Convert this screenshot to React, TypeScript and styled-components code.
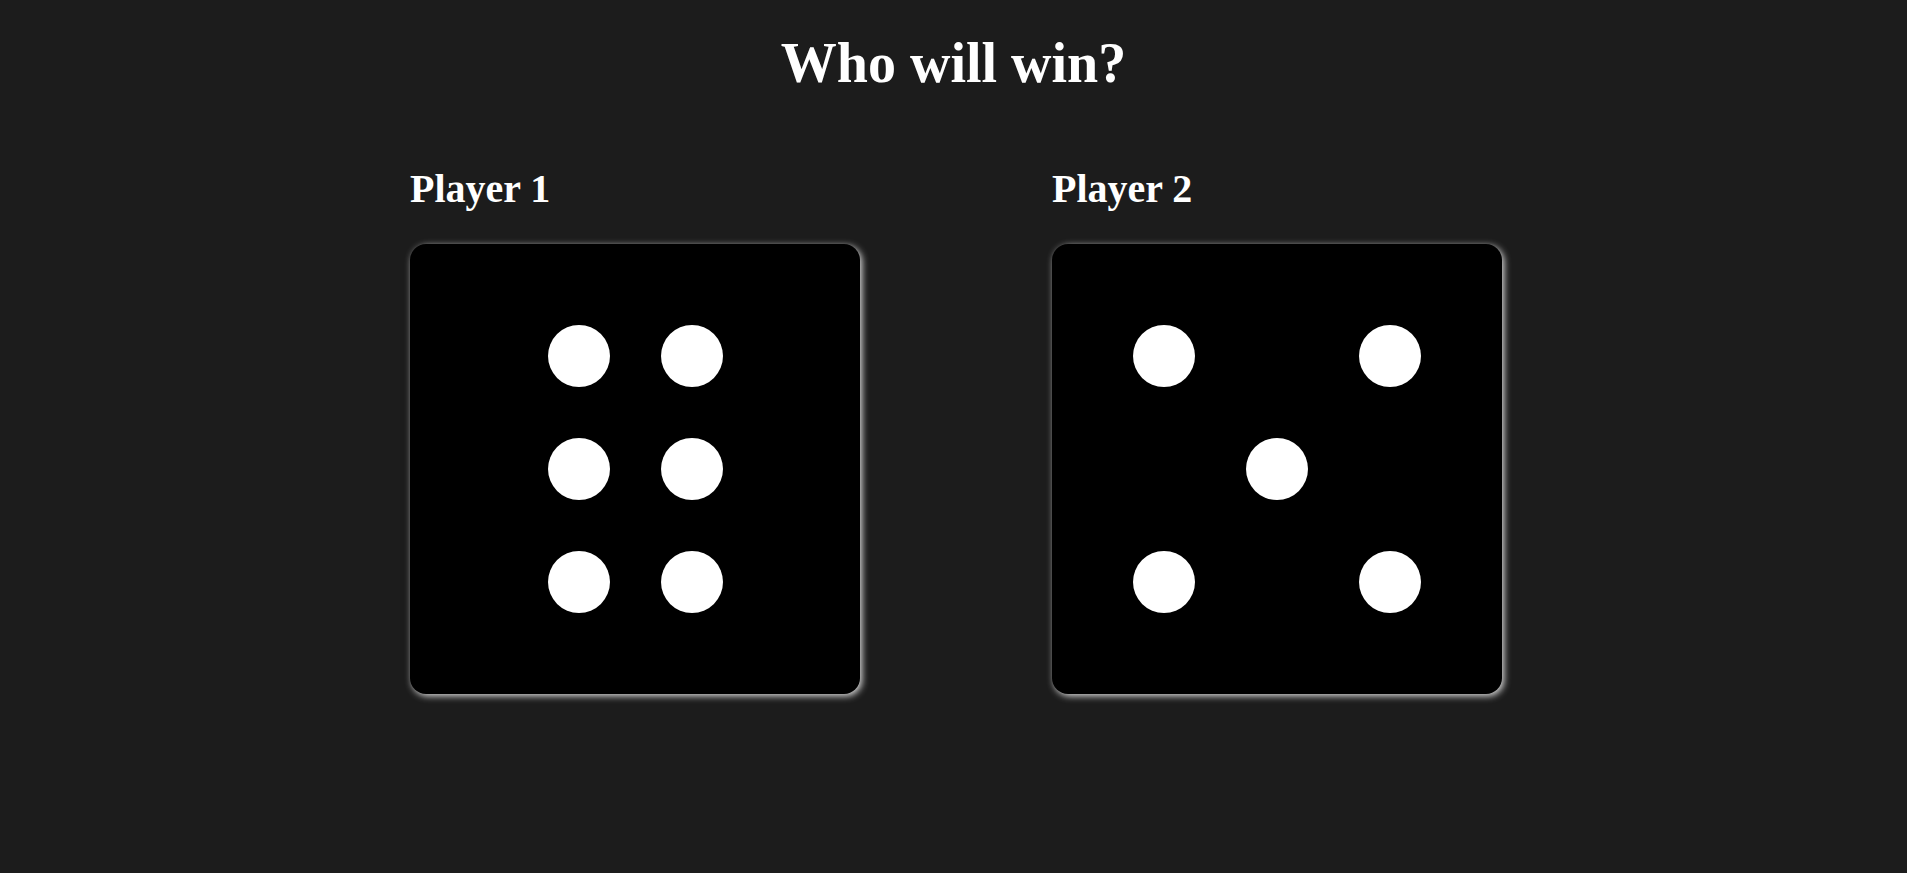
import React from 'react'
import styled, { createGlobalStyle } from 'styled-components'

const GlobalStyle = createGlobalStyle`
  html, body {
    margin: 0;
    padding: 0;
    background: #1c1c1c;
    color: #ffffff;
    font-family: "Liberation Serif", "Times New Roman", serif;
  }
`

type DieProps = {
  value: number
}

// grid cells (row, col) for each face on a 3x3 board
const layouts: Record<number, [number, number][]> = {
  1: [[2, 2]],
  2: [[1, 1], [3, 3]],
  3: [[1, 1], [2, 2], [3, 3]],
  4: [[1, 1], [1, 3], [3, 1], [3, 3]],
  5: [[1, 1], [1, 3], [2, 2], [3, 1], [3, 3]],
  6: [[1, 1], [1, 2], [2, 1], [2, 2], [3, 1], [3, 2]],
}

function Die(props: DieProps) {
  const dots = layouts[props.value]
  return (
    <DieBox>
      <Face $cols={props.value === 6 ? 2 : 3}>
        {dots.map(([r, c], i) => (
          <Dot key={i} $row={r} $col={c} />
        ))}
      </Face>
    </DieBox>
  )
}

export default function App() {
  return (
    <Page>
      <GlobalStyle />
      <Title>Who will win?</Title>
      <Players>
        <Player>
          <PlayerName>Player 1</PlayerName>
          <Die value={6} />
        </Player>
        <Player>
          <PlayerName>Player 2</PlayerName>
          <Die value={5} />
        </Player>
      </Players>
    </Page>
  )
}

const Page = styled.div`
  min-height: 873px;
  display: flex;
  flex-direction: column;
  align-items: center;
`

const Title = styled.h1`
  margin: 0;
  padding-top: 31px;
  font-size: 56px;
  font-weight: 700;
  line-height: 64px;
`

const Players = styled.div`
  display: flex;
  gap: 192px;
  margin-top: 71px;
  margin-left: 5px;
`

const Player = styled.div`
  display: flex;
  flex-direction: column;
`

const PlayerName = styled.h2`
  margin: 0 0 32px;
  font-size: 40px;
  font-weight: 700;
  line-height: 46px;
`

const DieBox = styled.div`
  width: 450px;
  height: 450px;
  background: #000;
  border-radius: 16px;
  box-shadow: 2px 2px 7px rgba(255, 255, 255, 0.85);
  display: flex;
  align-items: center;
  justify-content: center;
`

const Face = styled.div<{ $cols: number }>`
  display: grid;
  grid-template-columns: repeat(${p => p.$cols}, 62px);
  grid-template-rows: repeat(3, 62px);
  gap: 51px;
`

const Dot = styled.span<{ $row: number; $col: number }>`
  grid-row: ${p => p.$row};
  grid-column: ${p => p.$col};
  width: 62px;
  height: 62px;
  border-radius: 50%;
  background: #fff;
`
